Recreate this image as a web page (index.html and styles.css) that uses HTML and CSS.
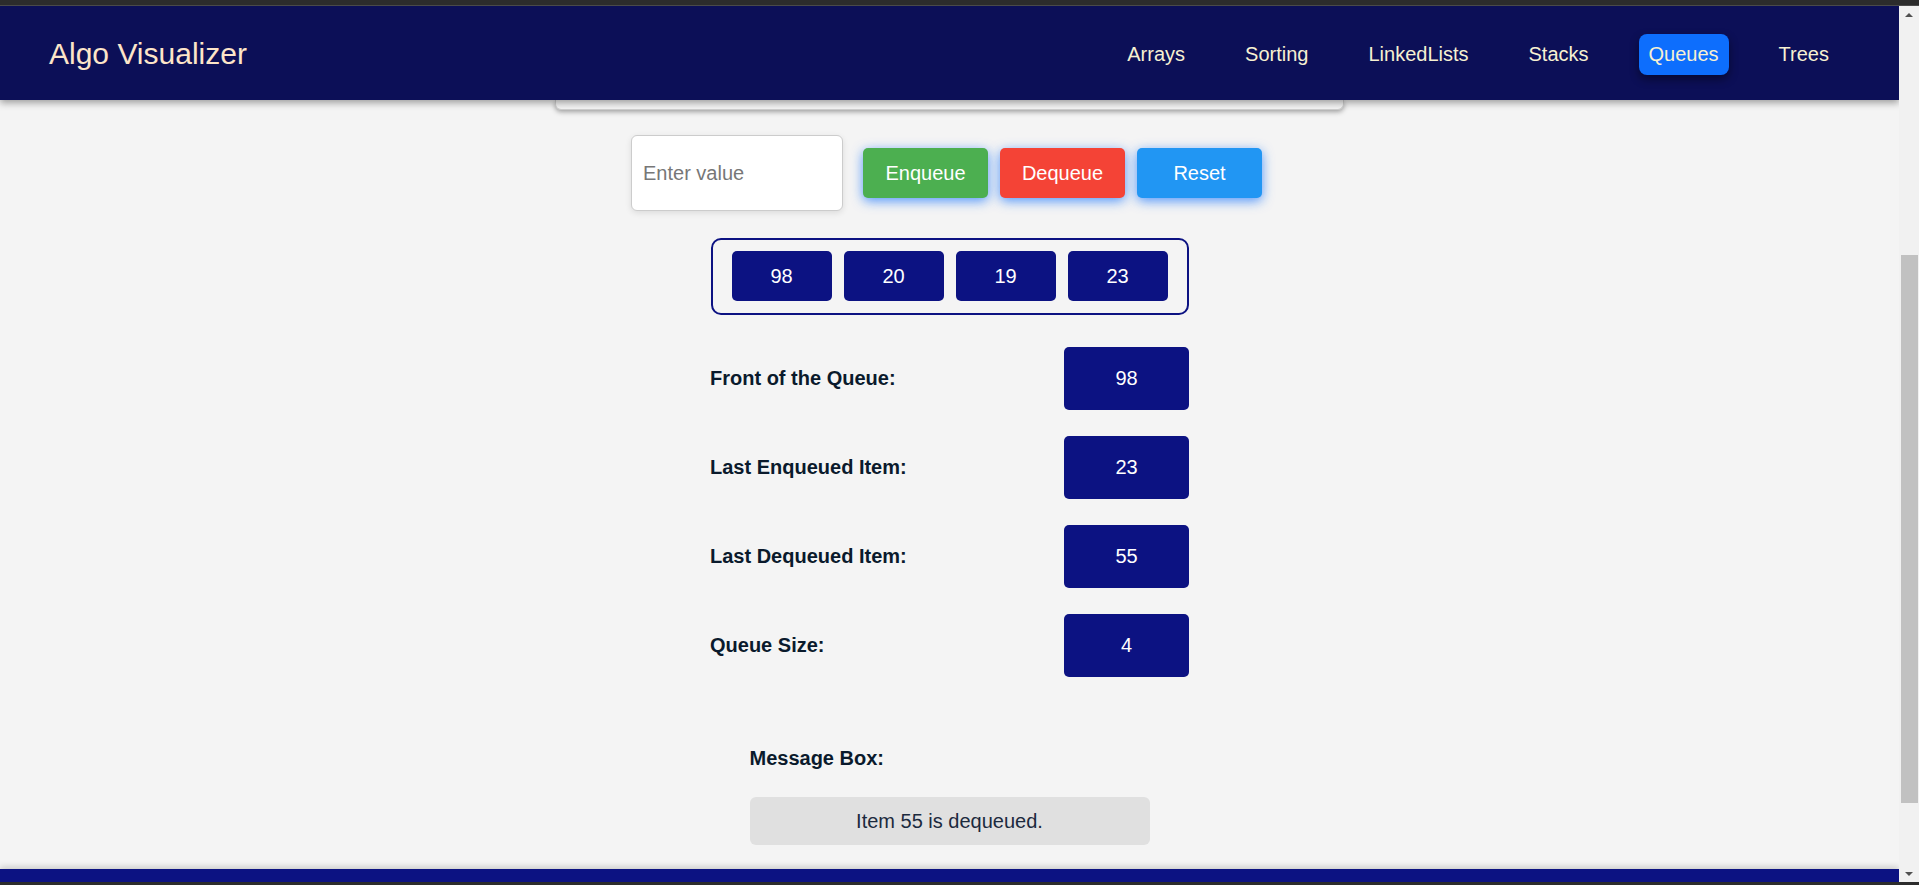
FILE: index.html
```html
<!DOCTYPE html>
<html lang="en">
<head>
<meta charset="utf-8">
<title>Algo Visualizer - Queues</title>
<link rel="stylesheet" href="styles.css">
</head>
<body>
<div class="chrome-top"></div>
<div class="viewport">
  <div class="page">
    <header class="navbar">
      <div class="brand">Algo Visualizer</div>
      <nav class="nav-links">
        <a class="nav-link">Arrays</a>
        <a class="nav-link">Sorting</a>
        <a class="nav-link">LinkedLists</a>
        <a class="nav-link">Stacks</a>
        <a class="nav-link active">Queues</a>
        <a class="nav-link">Trees</a>
      </nav>
    </header>
    <main class="content">
      <div class="card-edge"></div>
      <div class="controls">
        <input class="value-input" type="text" placeholder="Enter value">
        <button class="btn btn-enqueue">Enqueue</button>
        <button class="btn btn-dequeue">Dequeue</button>
        <button class="btn btn-reset">Reset</button>
      </div>
      <div class="queue-box">
        <div class="queue-item">98</div>
        <div class="queue-item">20</div>
        <div class="queue-item">19</div>
        <div class="queue-item">23</div>
      </div>
      <div class="stats">
        <div class="stat-row"><span class="stat-label">Front of the Queue:</span><span class="stat-value">98</span></div>
        <div class="stat-row"><span class="stat-label">Last Enqueued Item:</span><span class="stat-value">23</span></div>
        <div class="stat-row"><span class="stat-label">Last Dequeued Item:</span><span class="stat-value">55</span></div>
        <div class="stat-row"><span class="stat-label">Queue Size:</span><span class="stat-value">4</span></div>
      </div>
      <div class="message-section">
        <div class="message-label">Message Box:</div>
        <div class="message-box">Item 55 is dequeued.</div>
      </div>
    </main>
    <footer class="footer"></footer>
  </div>
  <div class="scrollbar">
    <div class="sb-arrow sb-up"></div>
    <div class="sb-track">
      <div class="sb-thumb"></div>
    </div>
    <div class="sb-arrow sb-down"></div>
  </div>
</div>
<div class="chrome-bottom"></div>
</body>
</html>
```
FILE: styles.css
```css
* { box-sizing: border-box; }
html, body { margin: 0; padding: 0; }
body {
  width: 1919px;
  height: 885px;
  overflow: hidden;
  display: flex;
  flex-direction: column;
  background: #f4f4f4;
  font-family: "Liberation Sans", Arial, sans-serif;
}
.chrome-top {
  height: 6px;
  background: #2c2c2c;
  border-bottom: 1px solid #4a4a4a;
  flex: none;
}
.chrome-bottom {
  height: 3px;
  background: #2c2c2c;
  flex: none;
}
.viewport {
  flex: 1;
  display: flex;
  min-height: 0;
}
.page {
  flex: 1;
  display: flex;
  flex-direction: column;
  min-width: 0;
  overflow: hidden;
}
.navbar {
  height: 94px;
  flex: none;
  background: #0c0f57;
  display: flex;
  align-items: center;
  justify-content: space-between;
  padding: 2px 60px 0 49px;
  box-shadow: 0 3px 7px rgba(0, 0, 0, 0.35);
  position: relative;
  z-index: 2;
}
.brand {
  font-size: 30px;
  color: #fde5c9;
  line-height: 34px;
}
.nav-links {
  display: flex;
  align-items: center;
  gap: 40px;
}
.nav-link {
  font-size: 20px;
  line-height: 23px;
  padding: 9px 10px;
  color: #f7f1d2;
  border-radius: 8px;
}
.nav-link.active {
  background: #0d6efd;
  box-shadow: 0 4px 10px rgba(0, 0, 0, 0.45);
}
.content {
  flex: 1;
  display: flex;
  flex-direction: column;
  align-items: center;
}
.card-edge {
  width: 789px;
  height: 10px;
  background: #f4f4f4;
  border: 1px solid #cfcfcf;
  border-top: none;
  border-radius: 0 0 6px 6px;
  box-shadow: 0 2px 5px rgba(0, 0, 0, 0.35);
}
.controls {
  margin-top: 25px;
  display: flex;
  align-items: center;
  height: 76px;
}
.value-input {
  width: 212px;
  height: 76px;
  border: 1px solid #cccccc;
  border-radius: 6px;
  background: #ffffff;
  font-family: inherit;
  font-size: 20px;
  padding: 0 11px;
  margin: 0 14px 0 0;
  box-shadow: 0 2px 6px rgba(0, 0, 0, 0.1);
  outline: none;
}
.value-input::placeholder { color: #777777; }
.btn {
  width: 125px;
  height: 50px;
  margin: 0 6px;
  border: none;
  border-radius: 5px;
  color: #ffffff;
  font-family: inherit;
  font-size: 20px;
  box-shadow: 0 3px 12px rgba(13, 110, 253, 0.7);
  padding: 0;
}
.btn-enqueue { background: #4caf50; }
.btn-dequeue { background: #f44336; }
.btn-reset { background: #2196f3; }
.queue-box {
  margin-top: 27px;
  display: flex;
  gap: 12px;
  padding: 11px 19px 12px;
  border: 2px solid #0c1282;
  border-radius: 10px;
}
.queue-item {
  width: 100px;
  height: 50px;
  background: #0c1282;
  color: #ffffff;
  border-radius: 5px;
  font-size: 20px;
  display: flex;
  align-items: center;
  justify-content: center;
}
.stats {
  margin-top: 32px;
  width: 479px;
  display: flex;
  flex-direction: column;
  gap: 26px;
}
.stat-row {
  display: flex;
  align-items: center;
  justify-content: space-between;
  height: 63px;
}
.stat-label {
  font-size: 20px;
  font-weight: bold;
  color: #0a1a2c;
}
.stat-value {
  width: 125px;
  height: 63px;
  background: #0c1282;
  color: #ffffff;
  border-radius: 5px;
  font-size: 20px;
  display: flex;
  align-items: center;
  justify-content: center;
}
.message-section {
  margin-top: 70px;
  width: 400px;
  display: flex;
  flex-direction: column;
}
.message-label {
  font-size: 20px;
  line-height: 23px;
  font-weight: bold;
  color: #0a1a2c;
  margin-bottom: 27px;
}
.message-box {
  height: 48px;
  background: #e0e0e0;
  border-radius: 6px;
  font-size: 20px;
  line-height: 48px;
  text-align: center;
  color: #1c2a3e;
}
.footer {
  height: 13px;
  flex: none;
  background: #0c1282;
  box-shadow: 0 -2px 6px rgba(0, 0, 0, 0.18);
}
.scrollbar {
  width: 20px;
  flex: none;
  background: #f1f1f1;
  display: flex;
  flex-direction: column;
  align-items: center;
}
.sb-arrow {
  height: 17px;
  width: 20px;
  flex: none;
  display: flex;
  align-items: center;
  justify-content: center;
}
.sb-up::before {
  content: "";
  border-left: 4px solid transparent;
  border-right: 4px solid transparent;
  border-bottom: 4px solid #505050;
}
.sb-down::before {
  content: "";
  border-left: 4px solid transparent;
  border-right: 4px solid transparent;
  border-top: 4px solid #505050;
}
.sb-track {
  flex: 1;
  width: 20px;
  padding: 232px 1px 62px 2px;
  display: flex;
}
.sb-thumb {
  flex: 1;
  background: #c1c1c1;
}
```
